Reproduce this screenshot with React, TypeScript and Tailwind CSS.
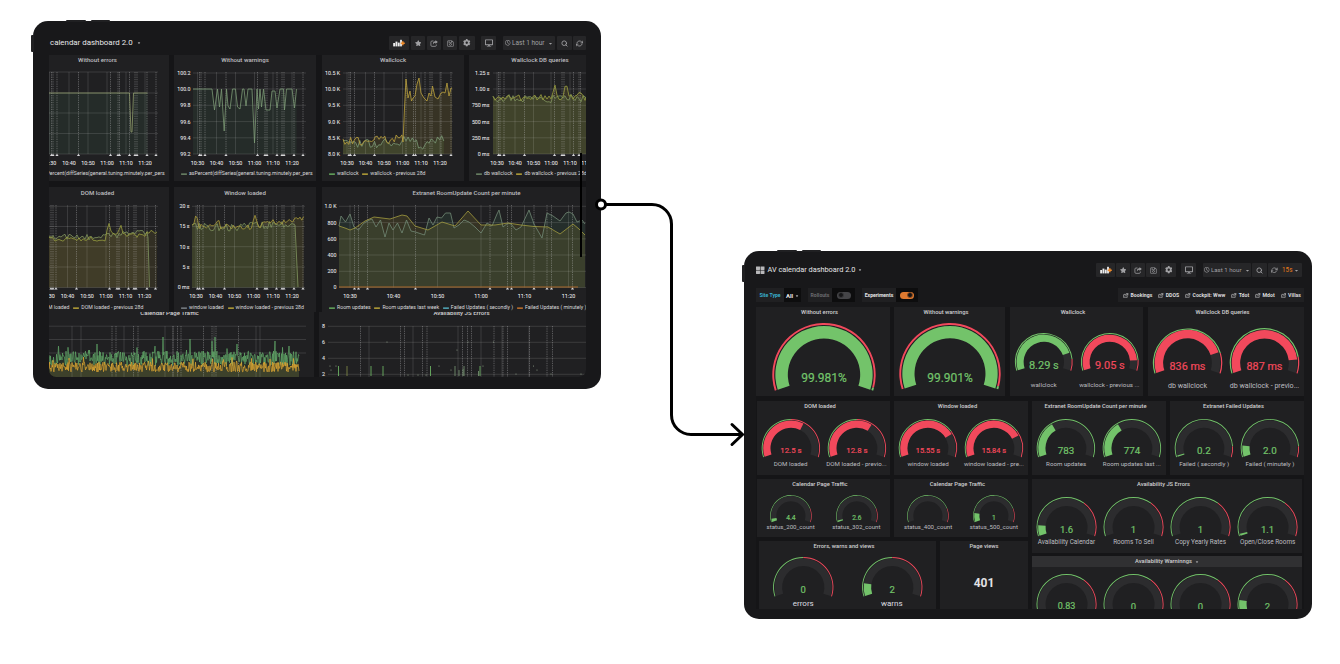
import React from "react";
import { FaStar, FaRegSave, FaCog, FaDesktop, FaRegClock, FaCaretDown, FaThLarge } from "react-icons/fa";
import { FiExternalLink, FiRefreshCw, FiSearch } from "react-icons/fi";

type Pt = [number, number];

const GREEN = "#73c36a";
const RED = "#f2495c";
const OLIVE = "#9b9f40";
const YELLOW = "#d3bb3c";
const SAGE = "#7c9a76";

function rng(seed: number) {
  let s = seed;
  return () => {
    s = (s * 1664525 + 1013904223) % 4294967296;
    return s / 4294967296;
  };
}

function noise(x0: number, x1: number, step: number, base: (x: number) => number, amp: number, seed: number): Pt[] {
  const r = rng(seed);
  const out: Pt[] = [];
  for (let x = x0; x <= x1; x += step) out.push([x, base(x) + (r() - 0.5) * amp * 2]);
  return out;
}

const bump = (x: number, c: number, h: number, w = 3) => h * Math.max(0, 1 - Math.abs(x - c) / w);

interface Series {
  pts: Pt[];
  color: string;
  fill?: string;
  fillOpacity?: number;
  width?: number;
}

interface ChartProps {
  box: [number, number, number, number];
  plot: [number, number, number, number];
  ys: { y: number; label?: string }[];
  xs: { x: number; label?: string }[];
  dotted: number[];
  series: Series[];
  labelX?: number;
  labelY?: number;
  marks?: boolean;
  dots?: Pt[];
}

function Chart({ box, plot, ys, xs, dotted, series, labelX = 0, labelY = 0, marks = true, dots = [] }: ChartProps) {
  const [px0, px1, py0, py1] = plot;
  return (
    <svg className="block shrink-0 font-[Roboto,sans-serif]" width={box[2]} height={box[3]} viewBox={box.join(" ")}>
      {series.map((s, i) =>
        s.fill ? (
          <polygon
            key={i}
            points={`${s.pts[0][0]},${py1} ${s.pts.map((p) => p.join(",")).join(" ")} ${s.pts[s.pts.length - 1][0]},${py1}`}
            fill={s.fill}
            opacity={s.fillOpacity ?? 0.12}
          />
        ) : null
      )}
      {ys.map((t, i) => (
        <g key={i}>
          <line x1={px0} x2={px1} y1={t.y} y2={t.y} stroke="#fff" strokeOpacity="0.15" strokeWidth="0.8" />
          {t.label && (
            <text x={labelX} y={t.y + 1.9} textAnchor="end" fontSize="5.3" fill="#dcdcde" stroke="#dcdcde" strokeWidth="0.12">{t.label}</text>
          )}
        </g>
      ))}
      {xs.map((t, i) => (
        <g key={i}>
          {t.x >= px0 && t.x <= px1 && <line x1={t.x} x2={t.x} y1={py0} y2={py1} stroke="#fff" strokeOpacity="0.15" strokeWidth="0.8" />}
          {t.label && (
            <text x={t.x} y={labelY + 1.9} textAnchor="middle" fontSize="5.4" fill="#dcdcde" stroke="#dcdcde" strokeWidth="0.12">{t.label}</text>
          )}
        </g>
      ))}
      {dotted.map((x, i) => (
        <g key={i}>
          <line x1={x} x2={x} y1={py0} y2={py1} stroke="#c8c8cc" strokeOpacity="0.5" strokeWidth="0.7" strokeDasharray="1.3 1" />
          {marks && <path d={`M${x - 1.6} ${py1 + 2}L${x} ${py1 - 0.3}L${x + 1.6} ${py1 + 2}Z`} fill="#d8d8da" />}
        </g>
      ))}
      {series.map((s, i) => (
        <polyline key={i} points={s.pts.map((p) => p.join(",")).join(" ")} fill="none" stroke={s.color} strokeWidth={s.width ?? 0.8} strokeLinejoin="round" />
      ))}
      {dots.map((d, i) => (
        <circle key={i} cx={d[0]} cy={d[1]} r="0.6" fill="#8a9a86" />
      ))}
    </svg>
  );
}

const times = ["10:30", "10:40", "10:50", "11:00", "11:10", "11:20"];
const xt = (x: number[]) => x.map((v, i) => ({ x: v, label: times[i] }));
const yt = (y: number[], labels?: string[]) => y.map((v, i) => ({ y: v, label: labels?.[i] }));

function Legend({ items }: { items: { c: string; t: string }[] }) {
  return (
    <div className="flex h-[9px] items-center gap-[3.8px] pt-[0.5px] pl-[7px] text-[5.2px] leading-none whitespace-nowrap text-[#dadadc]">
      {items.map((it) => (
        <span key={it.t} className="flex items-center gap-[2px]">
          <svg width="6" height="2" viewBox="0 0 6 2"><rect width="6" height="1.3" y="0.4" rx="0.4" fill={it.c} /></svg>
          {it.t}
        </span>
      ))}
    </div>
  );
}

function GraphPanel({ title, width, height, raise, children }: { title: string; width: string; height: string; raise?: boolean; children: React.ReactNode }) {
  return (
    <section className={`flex shrink-0 flex-col overflow-hidden bg-[#202022] ${width} ${height}`}>
      <h3 className={`flex h-[11px] shrink-0 items-center justify-center text-[6.1px] leading-none font-medium text-[#bebec0] ${raise ? "pb-[1px]" : "pt-[1.5px]"}`}>{title}</h3>
      {children}
    </section>
  );
}

function Btn({ w, children }: { w: string; children: React.ReactNode }) {
  return <button className={`flex h-[14px] shrink-0 items-center justify-center gap-[1.5px] rounded-[1px] bg-[#262628] text-[6.8px] leading-none whitespace-nowrap text-[#a0a0a3] ${w}`}>{children}</button>;
}

function AddPanelIcon() {
  return (
    <svg width="12" height="8" viewBox="0 0 12 8">
      <rect x="0.2" y="4" width="1.9" height="3.4" fill="#eee" />
      <rect x="2.5" y="2.6" width="1.9" height="4.8" fill="#eee" />
      <rect x="4.8" y="3.6" width="1.9" height="3.8" fill="#eee" />
      <rect x="7.1" y="0.8" width="1.8" height="6.6" fill="#eee" />
      <path d="M9.8 2.2v4M7.8 4.2h4" stroke="#ee8b2c" strokeWidth="1.5" />
    </svg>
  );
}

function ShareIcon() {
  return (
    <svg width="8" height="7" viewBox="0 0 16 14" fill="none" stroke="currentColor">
      <path d="M7 2H4a2.200 2.200 0 0 0-2.200 2.200V10.500A2.200 2.200 0 0 0 4 12.700H10.500A2.200 2.200 0 0 0 12.700 10.500V9" strokeWidth="1.5" />
      <path d="M11 0.500L15.500 4L11 7.500V5.300C8.500 5.200 7 6 6 8.800C5.600 5 7.500 2.900 11 2.700Z" fill="currentColor" strokeWidth="0.2" />
    </svg>
  );
}

function Toolbar({ interval }: { interval?: string }) {
  return (
    <div className="flex items-center">
      <Btn w={interval ? "w-[19px]" : "w-[20px]"}><AddPanelIcon /></Btn>
      <div className={interval ? "ml-[1px] flex gap-[1px]" : "ml-[2px] flex gap-[2px]"}>
        <Btn w="w-[14px]"><FaStar size={6.5} /></Btn>
        <Btn w="w-[14px]"><ShareIcon /></Btn>
        <Btn w="w-[14px]"><FaRegSave size={7} /></Btn>
        <Btn w={interval ? "w-[15px]" : "w-[16px]"}><FaCog size={7.5} /></Btn>
      </div>
      <div className={interval ? "ml-[5px]" : "ml-[6px]"}><Btn w="w-[15px]"><FaDesktop size={8} /></Btn></div>
      <div className="ml-[7px]">
        <Btn w={interval ? "w-[48px]" : "w-[52px]"}>
          <FaRegClock size={5.5} />
          <span className={interval ? "text-[6.1px]" : "text-[6.5px]"}>Last 1 hour</span>
          <FaCaretDown size={5} className="ml-[2px]" />
        </Btn>
      </div>
      <div className={interval ? "ml-[1px] flex gap-[1px]" : "ml-[2px] flex gap-[1px]"}>
        <Btn w="w-[15px]"><FiSearch size={7} strokeWidth={3} /></Btn>
        {interval ? (
          <Btn w="w-[34px]">
            <FiRefreshCw size={6.5} strokeWidth={2.8} />
            <span className="ml-[3px] text-[6.3px] text-[#eb7b18]">{interval}</span>
            <FaCaretDown size={5} />
          </Btn>
        ) : (
          <Btn w="w-[13px]"><FiRefreshCw size={7} strokeWidth={2.8} /></Btn>
        )}
      </div>
    </div>
  );
}

function Tablet({ place, children }: { place: string; children: React.ReactNode }) {
  return (
    <div className={`absolute h-[368px] w-[568px] rounded-[15px] bg-[#18181a] ${place}`}>
      <i className="absolute top-[14px] -left-[2px] h-[17px] w-[3px] rounded-l-[1px] bg-[#202022]" />
      <i className="absolute -top-[1px] left-[33px] h-[2px] w-[20px] rounded-t-[1px] bg-[#202022]" />
      <i className="absolute -top-[1px] left-[58px] h-[2px] w-[19px] rounded-t-[1px] bg-[#202022]" />
      {children}
    </div>
  );
}

const warningsPts: Pt[] = [
  [193, 89], [212, 89], [214.5, 110], [217.5, 89], [219.5, 107], [221.5, 89], [224.2, 131], [226.5, 89], [228, 106], [230, 109], [232.5, 89], [235.5, 89], [237.5, 107], [240, 109], [242.5, 89],
  [244, 89], [246, 106], [248, 89], [252, 89], [254.5, 143], [257, 89], [258.5, 109], [260, 89], [261.5, 107], [263.5, 89], [266, 110], [270, 110], [272, 91], [275, 91], [277, 108], [280, 89], [283.5, 89], [284.5, 110], [286.5, 89], [292, 89], [294.5, 108], [296.5, 89],
];

const wallclockPrev: Pt[] = [
  ...noise(343, 402, 1.9, (x) => 141 - bump(x, 378, 5, 10) - (x > 393 ? 3 : 0), 4, 7),
  [403, 142], [404.5, 108], [406, 79], [408, 98], [410, 91], [411.5, 101], [413, 98], [415, 96], [417, 84], [419, 78], [421, 93], [424, 98], [427, 101], [429, 93], [431, 96], [432.5, 86], [435, 97], [438, 99], [441, 93], [443, 92], [445, 93], [447, 83], [449, 96], [451, 88], [452, 88],
];

const roomUpdates: Pt[] = [
  [339, 226], [341, 216], [345.5, 222], [350, 214], [354, 227], [358.5, 230], [363, 224], [367, 221], [372, 219], [376, 227], [380.5, 220], [385, 237], [389, 223], [393, 230], [397.5, 223], [402, 233], [406.5, 220], [411, 231], [415.5, 232], [424.5, 235], [429, 218], [433, 225], [437, 217], [441.5, 218], [445.5, 213], [450.5, 213], [454, 228], [459, 225], [464, 220], [469, 222], [475, 227], [481, 233], [487, 223], [492, 226], [497, 214], [499, 210], [503, 227], [508, 223], [511, 224], [516, 230], [521, 227], [529, 210], [534, 224], [542, 238], [547, 213], [553, 216], [560, 221], [566, 213], [569, 212], [573, 214], [577, 222], [582, 220], [585, 224],
];

const roomUpdatesPrev: Pt[] = [
  [339, 226], [345, 228], [350, 230], [355, 228], [365, 221], [374, 217], [390, 219], [402, 215], [407, 216], [415, 226], [428, 230], [442, 222], [455, 226], [468, 211], [481, 225], [495, 225], [508, 223], [521, 225], [534, 226.5], [548, 227], [560, 234], [573, 224], [579, 229], [585, 235],
];

function LeftDashboard() {
  const rows1 = [73, 89, 105.3, 121.6, 137.8, 154];
  const rows2 = [206.3, 226.5, 246.7, 267, 287.5];
  const traffic = rng(99);
  const green: Pt[] = [];
  const gold: Pt[] = [];
  const spikes: Record<number, number> = { 48: 344, 114: 337, 141: 339, 163: 341, 166: 337, 188: 344, 226: 341, 240: 346 };
  for (let x = 0; x <= 250; x += 0.5) {
    green.push([49 + x, spikes[x] ?? 351 + traffic() * 15 - (traffic() > 0.93 ? 5 : 0)]);
    gold.push([49 + x, 362 + traffic() * 10 - (traffic() > 0.95 ? 5 : 0)]);
  }
  const errs: [number, number, string][] = [[338.5, 366, GREEN], [347, 366, "#86904a"], [371, 366, GREEN], [383, 366, GREEN], [430.5, 366, GREEN], [455, 366, SAGE], [459, 370, SAGE], [464, 366, SAGE], [480, 366, GREEN], [463, 369, SAGE], [478.5, 371, SAGE]];
  return (
    <div className="ml-[16px] flex h-[356px] w-[537px] flex-col overflow-hidden rounded-b-[7px] pt-[15px]">
      <header className="flex h-[14px] shrink-0 items-center justify-between pl-[1px]">
        <h1 className="flex items-center gap-[4px] text-[7.9px] leading-none whitespace-nowrap text-[#e6e6e8]">calendar dashboard 2.0 <FaCaretDown size={4} /></h1>
        <Toolbar />
      </header>
      <div className="mt-[5px] -ml-[23px] flex w-[585px] shrink-0 flex-col gap-[6px] bg-[#151517]">
        <div className="flex gap-[5px]">
          <GraphPanel raise title="Without errors" width="w-[143px]" height="h-[126px]">
            <Chart box={[26, 66, 143, 103]} plot={[49, 158, 72, 154]} labelY={163} ys={yt([72, 93, 113, 133.5, 154])} xs={xt([49.5, 69, 88, 107, 126, 145])}
              dotted={[51.5, 53, 57, 78.5, 110.5, 118, 119.5, 129.5, 135, 137, 147, 156]}
              series={[{ pts: [[49, 93], [129.5, 93], [131, 132], [132, 132], [133.5, 93], [147.5, 93]], color: "#8f9c6c", fill: "#56a06a", fillOpacity: 0.1 }]} />
            <Legend items={[{ c: SAGE, t: "asPercent(diffSeries(general.tuning.minutely.per_pers" }]} />
          </GraphPanel>
          <GraphPanel raise title="Without warnings" width="w-[142px]" height="h-[126px]">
            <Chart box={[174, 66, 142, 103]} plot={[193, 306, 72, 154]} labelX={190.5} labelY={163} ys={yt(rows1, ["100.2", "100.0", "99.8", "99.6", "99.4", "99.2"])} xs={xt([197.5, 216.5, 235.5, 254.5, 273, 292])}
              dotted={[199.5, 201, 205, 226, 257.5, 265, 267, 277, 282, 284, 294, 303]}
              series={[{ pts: warningsPts, color: SAGE, fill: "#56a06a", fillOpacity: 0.1 }]} />
            <Legend items={[{ c: SAGE, t: "asPercent(diffSeries(general.tuning.minutely.per_pers" }]} />
          </GraphPanel>
          <GraphPanel raise title="Wallclock" width="ml-[1px] w-[142px]" height="h-[126px]">
            <Chart box={[322, 66, 142, 103]} plot={[343, 453, 72, 154]} labelX={340} labelY={163} ys={yt(rows1, ["10.5 K", "10.0 K", "9.5 K", "9.0 K", "8.5 K", "8.0 K"])} xs={xt([347, 365.5, 384, 402.5, 421, 440])}
              dotted={[349, 350.5, 354.5, 374.5, 406, 413.5, 415.5, 425, 430, 432, 441, 451]}
              series={[
                { pts: noise(343, 444, 2.1, (x) => 143.5 - bump(x, 407, 5, 8) - (x > 425 ? 3 : 0) + bump(x, 420, 5, 5), 5, 21), color: SAGE, fill: GREEN, fillOpacity: 0.12 },
                { pts: wallclockPrev, color: "#bda23d", fill: "#c9a83a", fillOpacity: 0.14 },
              ]} />
            <Legend items={[{ c: GREEN, t: "wallclock" }, { c: YELLOW, t: "wallclock - previous 28d" }]} />
          </GraphPanel>
          <GraphPanel raise title="Wallclock DB queries" width="w-[142px]" height="h-[126px]">
            <Chart box={[469, 66, 142, 103]} plot={[493, 600, 72, 154]} labelX={489.5} labelY={163} ys={yt(rows1, ["1.25 s", "1.00 s", "750 ms", "500 ms", "250 ms", "0 ms"])} xs={xt([497, 515, 533.5, 551, 570, 588])}
              dotted={[498.5, 500, 504, 524.5, 554.5, 562, 564, 573.5, 579, 580.5]}
              series={[
                { pts: noise(493, 590, 2, () => 98.5, 4.2, 3), color: "#819660", fill: GREEN, fillOpacity: 0.1 },
                { pts: noise(493, 590, 2, (x) => 98 - bump(x, 555, 14) - bump(x, 566, 14) - bump(x, 580, 6), 3.5, 17), color: OLIVE, fill: YELLOW, fillOpacity: 0.14 },
              ]} />
            <Legend items={[{ c: SAGE, t: "db wallclock" }, { c: YELLOW, t: "db wallclock - previous 28d" }]} />
          </GraphPanel>
        </div>
        <div className="flex gap-[5px]">
          <GraphPanel title="DOM loaded" width="w-[143px]" height="h-[125px]">
            <Chart box={[26, 198, 143, 105]} plot={[49, 158, 205, 287.5]} labelY={296.5} ys={yt(rows2)} xs={xt([48, 67.5, 87, 106, 125.5, 144.5])}
              dotted={[51, 53, 56, 76.5, 109.5, 117, 119, 128.5, 134, 136, 147, 155.5]}
              series={[
                { pts: [...noise(49, 147, 2, (x) => 237 - (x > 100 ? 2 : 0) - (x > 120 ? 2 : 0), 3, 5), [148, 238], [149.5, 287]], color: "#819660", fill: "#a9a848", fillOpacity: 0.11 },
                { pts: noise(49, 158, 2, (x) => 239 - bump(x, 109, 10) - bump(x, 121, 10) - (x > 105 ? 3.5 : 0) - (x > 145 ? 3 : 0), 2.3, 8), color: OLIVE, fill: YELLOW, fillOpacity: 0.1 },
              ]} />
            <Legend items={[{ c: SAGE, t: "DOM loaded" }, { c: YELLOW, t: "DOM loaded - previous 28d" }]} />
          </GraphPanel>
          <GraphPanel title="Window loaded" width="w-[142px]" height="h-[125px]">
            <Chart box={[174, 198, 142, 105]} plot={[192, 305, 205, 287.5]} labelX={189.5} labelY={296.5} ys={yt(rows2, ["20 s", "15 s", "10 s", "5 s", "0 ms"])} xs={xt([196, 215.5, 234.5, 253.5, 273, 292])}
              dotted={[197.5, 199.5, 203, 224.5, 257, 265, 267, 276.5, 282, 284, 294, 303]}
              series={[
                { pts: [...noise(192, 294, 1.8, (x) => 227 - (x > 240 ? 2 : 0), 4, 31), [295, 225], [298, 287]], color: "#819660", fill: GREEN, fillOpacity: 0.09 },
                { pts: noise(192, 305, 1.8, (x) => 227 - bump(x, 196, 12) - bump(x, 218, 5) - bump(x, 255, 12, 4) - (x > 262 ? 5 : 0) - (x > 292 ? 3 : 0), 3.4, 14), color: "#aa9c3b", fill: YELLOW, fillOpacity: 0.13 },
              ]} />
            <Legend items={[{ c: "#8b9299", t: "window loaded" }, { c: YELLOW, t: "window loaded - previous 28d" }]} />
          </GraphPanel>
          <GraphPanel title="Extranet RoomUpdate Count per minute" width="ml-[1px] w-[289px]" height="h-[125px]">
            <Chart box={[322, 198, 289, 105]} plot={[339, 600, 205, 287.5]} labelX={336.5} labelY={296.5} ys={yt([206.3, 222.6, 238.9, 255, 271.3, 287.5], ["1.0 K", "800", "600", "400", "200", "0"])} xs={xt([350, 393.5, 437.5, 481, 524.5, 568.5])}
              dotted={[354.5, 358.5, 367.5, 415.5, 490, 507.5, 511.5, 534, 547, 551.5, 572.5]}
              series={[
                { pts: roomUpdates, color: "#728a76", fill: "#56a07a", fillOpacity: 0.11 },
                { pts: roomUpdatesPrev, color: "#a39d40", fill: YELLOW, fillOpacity: 0.12 },
                { pts: [[339, 287], [578, 287]], color: "#a8692c", width: 1.2 },
              ]} />
            <Legend items={[{ c: GREEN, t: "Room updates" }, { c: YELLOW, t: "Room updates last week" }, { c: "#5bc4d8", t: "Failed Updates ( secondly )" }, { c: "#e0802c", t: "Failed Updates ( minutely )" }]} />
          </GraphPanel>
        </div>
      </div>
      <div className="flex h-[66px] shrink-0 gap-[5px] bg-[#151517]">
        <section className="flex w-[265px] shrink-0 flex-col overflow-hidden bg-[#202022]">
          <h3 className="-mt-[3px] mr-[24px] flex h-[9px] shrink-0 items-center justify-center text-[6.1px] leading-none font-medium text-[#d4d4d6]">Calendar Page Traffic</h3>
          <Chart box={[49, 318, 265, 60]} plot={[49, 306, 326, 378]} marks={false} ys={yt([326.2, 339.5, 353])} xs={[72, 81, 124, 165, 173, 214, 256, 260].map((x) => ({ x }))}
            dotted={[112, 116, 133.5, 138, 173, 177.5, 181, 203.5, 212, 216, 238.5]}
            series={[
              { pts: green, color: "#62a869", fill: GREEN, fillOpacity: 0.1, width: 0.7 },
              { pts: gold, color: "#d9a433", fill: YELLOW, fillOpacity: 0.12, width: 0.75 },
            ]} />
        </section>
        <section className="flex w-[267px] shrink-0 flex-col overflow-hidden bg-[#202022]">
          <h3 className="-mt-[3px] ml-[18px] flex h-[9px] shrink-0 items-center justify-center text-[6.1px] leading-none font-medium text-[#d4d4d6]">Availability JS Errors</h3>
          <Chart box={[319, 318, 267, 60]} plot={[328, 586, 326, 378]} marks={false} labelX={325} ys={yt([326.3, 342.3, 358.3, 374.3], ["8", "6", "4", "2"])} xs={[369, 413, 458, 481, 502, 529].map((x) => ({ x }))}
            dotted={[360.5, 400.5, 404.5, 422.5, 427, 462.5, 467.5, 471.5, 494, 503, 507.5, 529.5, 547, 552.5]}
            dots={[[387, 342], [457, 350], [468, 342], [493.5, 342], [439, 366], [330, 366], [336, 366], [331, 370], [483, 366], [451, 370], [533.5, 366], [537, 370], [516, 374], [408, 375], [418, 375], [426, 375], [551, 374], [581, 374]]}
            series={errs.map(([x, y, color]) => ({ pts: [[x, 376], [x, y]] as Pt[], color }))} />
        </section>
      </div>
    </div>
  );
}

function arc(cx: number, cy: number, ro: number, ri: number, f0: number, f1: number) {
  const a = (f: number) => ((198 - 216 * f) * Math.PI) / 180;
  const p = (r: number, f: number) => `${(cx + r * Math.cos(a(f))).toFixed(2)} ${(cy - r * Math.sin(a(f))).toFixed(2)}`;
  const large = (f1 - f0) * 216 > 180 ? 1 : 0;
  return `M${p(ro, f0)}A${ro} ${ro} 0 ${large} 1 ${p(ro, f1)}L${p(ri, f1)}A${ri} ${ri} 0 ${large} 0 ${p(ri, f0)}Z`;
}

interface GaugeProps {
  cell: number;
  r: number;
  ring: number;
  value: number;
  limit: number;
  low?: string;
  high?: string;
  color?: string;
  text: string;
  size: number;
  dy?: number;
  label?: string;
  labelClass?: string;
}

function Gauge({ cell, r, ring, value, limit, low = GREEN, high = RED, color = GREEN, text, size, dy = 3, label, labelClass = "mt-[0.5px] h-[8px] text-[6.4px]" }: GaugeProps) {
  const h = r * 1.33 + 1;
  const cx = cell / 2;
  const ro = r - ring - r * 0.022;
  const ri = r * 0.7;
  return (
    <div className="flex shrink-0 flex-col items-center" style={{ width: cell }}>
      <svg className="block overflow-visible font-[Roboto,sans-serif]" width={cell} height={h} viewBox={`0 0 ${cell} ${h}`}>
        <path d={arc(cx, r, ro, ri, 0, 1)} fill="#2c2c2e" />
        {value > 0 && <path d={arc(cx, r, ro, ri, 0, value)} fill={color} />}
        <path d={arc(cx, r, r, r - ring, 0, limit)} fill={low} />
        {limit < 1 && <path d={arc(cx, r, r, r - ring, limit, 1)} fill={high} />}
        <text x={cx} y={r + dy + size * 0.36} textAnchor="middle" fontSize={size} fill={color} stroke={color} strokeWidth="0.2">{text}</text>
      </svg>
      {label && <span className={`flex items-center leading-none whitespace-nowrap text-[#bdbdc0] ${labelClass}`}>{label}</span>}
    </div>
  );
}

function GaugePanel({ title, box, gap, children }: { title: string; box: string; gap: string; children: React.ReactNode }) {
  return (
    <section className={`flex shrink-0 flex-col overflow-hidden bg-[#202022] ${box}`}>
      <h3 className="flex h-[12px] shrink-0 items-center justify-center pt-[1px] pr-[7px] text-[5.75px] leading-none font-medium text-[#cfcfd1]">{title}</h3>
      <div className={`flex justify-center ${gap}`}>{children}</div>
    </section>
  );
}

function Links() {
  return (
    <nav className="flex h-[14px] w-[186px] items-center justify-between bg-[#202022] pt-[1px] pr-[3px] pl-[5px] text-[5.2px] font-bold text-[#dcdcde]">
      {["Bookings", "DDOS", "Cockpit: Www", "Tdot", "Mdot", "Villas"].map((l) => (
        <a key={l} className="flex items-center gap-[2px] leading-none whitespace-nowrap"><FiExternalLink size={5.5} strokeWidth={2.6} />{l}</a>
      ))}
    </nav>
  );
}

function Toggle({ on }: { on?: boolean }) {
  return (
    <span className={`flex h-[7px] w-[14px] items-center rounded-full p-[1px] ${on ? "justify-end bg-[#e07a30]" : "justify-start bg-[#454548]"}`}>
      <i className={`block h-[6px] w-[6px] rounded-full border bg-[#151517] ${on ? "border-[#8a4d22]" : "border-[#39393b]"}`} />
    </span>
  );
}

function RightDashboard() {
  const small = { r: 29.2, ring: 0.9, cell: 65.8 };
  const tiny = { r: 20.8, ring: 0.6, cell: 65.8, size: 6.6, limit: 0.82, dy: 2.2, labelClass: "-mt-[0.5px] h-[8px] text-[6.1px]" };
  const js = { r: 30, ring: 0.9, cell: 67.1, size: 9.5, limit: 0.667, dy: 2.2 };
  const label1 = "mt-[9.5px] h-[8px] text-[6.2px]";
  const label2 = "mt-[1.5px] h-[8px] text-[6.2px]";
  return (
    <div className="ml-[12px] flex h-[358px] w-[548px] flex-col overflow-hidden pt-[12px]">
      <header className="flex h-[14px] shrink-0 items-center justify-between pr-[2px]">
        <h1 className="flex items-center gap-[3px] text-[7.35px] leading-none whitespace-nowrap text-[#e6e6e8]"><FaThLarge size={8.5} className="text-[#b8b8ba]" />AV calendar dashboard 2.0 <FaCaretDown size={4} /></h1>
        <Toolbar interval="15s" />
      </header>
      <div className="mt-[11px] flex h-[14px] shrink-0 items-center text-[5.1px] leading-none font-bold">
        <span className="flex h-full w-[28px] items-center justify-center bg-[#202022] pt-[1px] text-[#38aecb]">Site Type</span>
        <span className="flex h-full w-[17px] items-center justify-center gap-[2px] bg-[#0d0d0e] pt-[1px] text-[6px] text-[#e6e6e8]">All <FaCaretDown size={4} /></span>
        <span className="ml-[7px] flex h-full w-[24px] items-center justify-center bg-[#202022] pt-[1px] text-[#6c6c6f]">Rollouts</span>
        <span className="flex h-full w-[23px] items-center justify-center bg-[#0d0d0e]"><Toggle /></span>
        <span className="ml-[7px] flex h-full w-[34px] items-center justify-center bg-[#202022] pt-[1px] text-[#e6e6e8]">Experiments</span>
        <span className="mr-auto flex h-full w-[22px] items-center justify-center bg-[#0d0d0e]"><Toggle on /></span>
        <Links />
      </div>
      <div className="mt-[4.5px] flex shrink-0 flex-col bg-[#151517]">
        <div className="flex">
          <GaugePanel title="Without errors" box="h-[89.5px] w-[134px]" gap="mt-[4px] ml-[1px]">
            <Gauge cell={120} r={51.7} ring={1.9} value={1} limit={0.985} low={RED} high={GREEN} text="99.981%" size={12} dy={2.9} />
          </GaugePanel>
          <GaugePanel title="Without warnings" box="ml-[4px] h-[89.5px] w-[111px]" gap="mt-[4px] ml-[1px]">
            <Gauge cell={110} r={50.7} ring={1.9} value={1} limit={0.985} low={RED} high={GREEN} text="99.901%" size={12} dy={3.6} />
          </GaugePanel>
          <GaugePanel title="Wallclock" box="ml-[5px] h-[89.5px] w-[133px]" gap="mt-[14px]">
            <Gauge cell={65.6} r={28.9} ring={1} value={0.825} limit={0.89} text="8.29 s" size={11} dy={3} label="wallclock" labelClass={label1} />
            <Gauge cell={65.6} r={28.9} ring={1} value={0.9} limit={0.9} color={RED} text="9.05 s" size={11} dy={3} label="wallclock - previous ..." labelClass={label1} />
          </GaugePanel>
          <GaugePanel title="Wallclock DB queries" box="ml-[5px] h-[89.5px] w-[156px]" gap="mt-[9px]">
            <Gauge cell={77} r={34.8} ring={1.2} value={0.83} limit={0.84} color={RED} text="836 ms" size={10.8} dy={3} label="db wallclock" labelClass="mt-[7px] h-[8px] text-[7.1px]" />
            <Gauge cell={77} r={34.8} ring={1.2} value={0.89} limit={0.87} color={RED} text="887 ms" size={10.8} dy={3} label="db wallclock - previo..." labelClass="mt-[7px] h-[8px] text-[7.1px]" />
          </GaugePanel>
        </div>
        <div className="mt-[4.5px] ml-[1px] flex gap-[4px]">
          <GaugePanel title="DOM loaded" box="h-[74px] w-[133px]" gap="mt-[6.5px]">
            <Gauge {...small} value={0.625} limit={0.5} color={RED} text="12.5 s" size={7.8} dy={2} label="DOM loaded" labelClass={label2} />
            <Gauge {...small} value={0.648} limit={0.5} color={RED} text="12.8 s" size={7.8} dy={2} label="DOM loaded - previo..." labelClass={label2} />
          </GaugePanel>
          <GaugePanel title="Window loaded" box="h-[74px] w-[134px]" gap="mt-[6.5px]">
            <Gauge {...small} value={0.775} limit={0.75} color={RED} text="15.55 s" size={7.4} dy={2} label="window loaded" labelClass={label2} />
            <Gauge {...small} value={0.79} limit={0.75} color={RED} text="15.84 s" size={7.4} dy={2} label="window loaded - pre..." labelClass={label2} />
          </GaugePanel>
          <GaugePanel title="Extranet RoomUpdate Count per minute" box="h-[74px] w-[134px]" gap="mt-[6.5px]">
            <Gauge {...small} value={0.36} limit={1} text="783" size={9.8} dy={2.2} label="Room updates" labelClass={label2} />
            <Gauge {...small} value={0.36} limit={1} text="774" size={9.8} dy={2.2} label="Room updates last ..." labelClass={label2} />
          </GaugePanel>
          <GaugePanel title="Extranet Failed Updates" box="h-[74px] w-[134px]" gap="mt-[6.5px]">
            <Gauge {...small} value={0.012} limit={0.9} text="0.2" size={9.8} dy={2.2} label="Failed ( secondly )" labelClass={label2} />
            <Gauge {...small} value={0.11} limit={0.9} text="2.0" size={9.8} dy={2.2} label="Failed ( minutely )" labelClass={label2} />
          </GaugePanel>
        </div>
        <div className="mt-[4px] ml-[1px] flex gap-[4px]">
          <div className="flex w-[271px] shrink-0 flex-col">
            <div className="flex gap-[4px]">
              <GaugePanel title="Calendar Page Traffic" box="h-[58px] w-[133px]" gap="mt-[4.5px]">
                <Gauge {...tiny} value={0.045} text="4.4" label="status_200_count" />
                <Gauge {...tiny} value={0.02} text="2.6" label="status_302_count" />
              </GaugePanel>
              <GaugePanel title="Calendar Page Traffic" box="h-[58px] w-[134px]" gap="mt-[4.5px]">
                <Gauge {...tiny} value={0} text="" label="status_400_count" />
                <Gauge {...tiny} value={0.12} text="1" label="status_500_count" />
              </GaugePanel>
            </div>
            <div className="mt-[4px] ml-[2px] flex gap-[4px]">
              <GaugePanel title="Errors, warns and views" box="h-[69px] w-[177px]" gap="mt-[4px]">
                <Gauge cell={88.5} r={30.2} ring={0.9} value={0} limit={0.5} text="0" size={9.5} dy={2.3} label="errors" labelClass="mt-[1.5px] h-[9px] text-[8px] text-[#dedee0]" />
                <Gauge cell={88.5} r={30.2} ring={0.9} value={0.12} limit={0.5} text="2" size={9.5} dy={2.3} label="warns" labelClass="mt-[1.5px] h-[9px] text-[8px] text-[#dedee0]" />
              </GaugePanel>
              <section className="flex h-[69px] w-[88px] shrink-0 flex-col items-center bg-[#202022]">
                <h3 className="flex h-[12px] items-center pt-[1px] text-[5.75px] leading-none font-medium text-[#cfcfd1]">Page views</h3>
                <strong className="mt-[24.5px] text-[12px] leading-none font-bold text-[#e2e2e4]">401</strong>
              </section>
            </div>
          </div>
          <div className="flex w-[270px] shrink-0 flex-col">
            <GaugePanel title="Availability JS Errors" box="h-[74px] w-[270px]" gap="mt-[6px]">
              <Gauge {...js} value={0.1} text="1.6" label="Availability Calendar" />
              <Gauge {...js} value={0} text="1" label="Rooms To Sell" />
              <Gauge {...js} value={0} text="1" label="Copy Yearly Rates" />
              <Gauge {...js} value={0.02} text="1.1" label="Open/Close Rooms" />
            </GaugePanel>
            <h3 className="mt-[3.5px] flex h-[11px] items-center justify-center gap-[3px] bg-[#303032] pt-[1px] text-[5.75px] leading-none font-medium text-[#cfcfd1]">Availability Warninngs <FaCaretDown size={4} /></h3>
            <div className="flex h-[42.5px] justify-center overflow-hidden bg-[#202022] pt-[6.5px]">
              <Gauge {...js} value={0} text="0.83" size={9} />
              <Gauge {...js} value={0} text="0" />
              <Gauge {...js} value={0} text="0" />
              <Gauge {...js} value={0.12} text="2" />
            </div>
          </div>
        </div>
      </div>
    </div>
  );
}

export default function App() {
  return (
    <main className="relative h-[664px] w-[1340px] overflow-hidden bg-white font-[Roboto,sans-serif]">
      <Tablet place="left-[33px] top-[21px]">
        <LeftDashboard />
        <i className="absolute top-[132px] left-[547px] h-[104px] w-[2px] bg-black" />
      </Tablet>
      <Tablet place="left-[744px] top-[251px]">
        <RightDashboard />
      </Tablet>
      <svg className="absolute top-[195px] left-[590px]" width="160" height="256" viewBox="590 195 160 256" fill="none" stroke="#000" strokeWidth="3">
        <path d="M605 204.5H652a19.5 19.5 0 0 1 19.5 19.5V415a19.5 19.5 0 0 0 19.5 19.5H742" />
        <path d="M732 424.5L742.5 434.5L732 444.5" strokeLinecap="round" />
        <circle cx="601" cy="204.5" r="4.5" fill="#fff" />
      </svg>
    </main>
  );
}
